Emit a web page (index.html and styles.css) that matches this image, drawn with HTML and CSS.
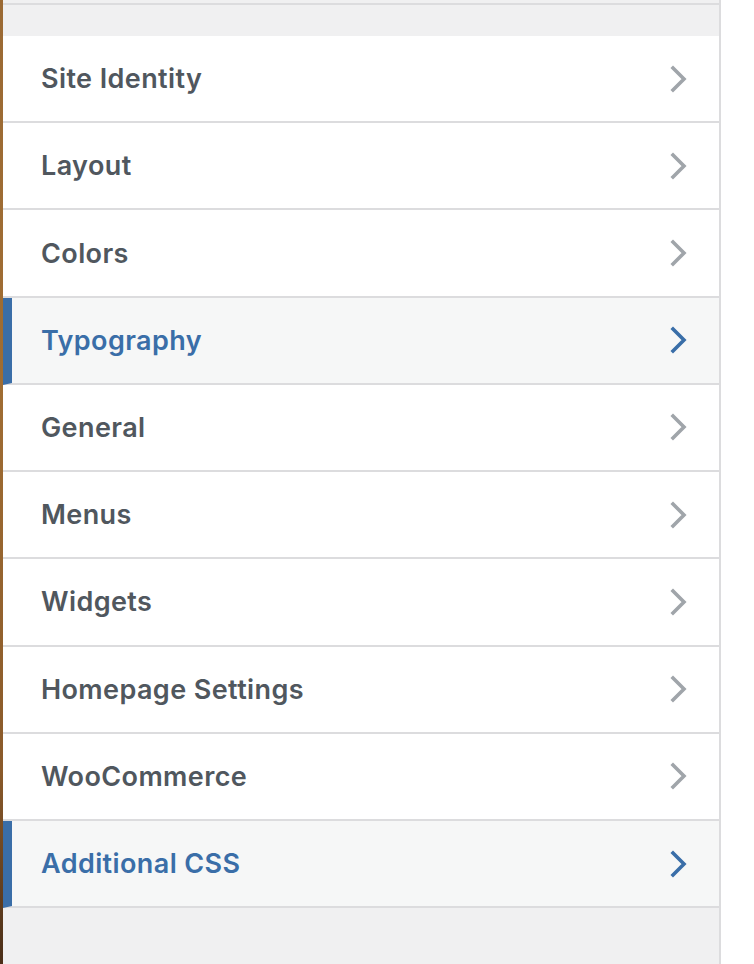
FILE: index.html
```html
<!DOCTYPE html>
<html lang="en">
<head>
<meta charset="utf-8">
<title>Customizer</title>
<link rel="stylesheet" href="styles.css">
</head>
<body>
<div class="frame">
  <div class="wood"></div>
  <div class="panel">
    <div class="top-band"></div>
    <ul class="sections">
      <li class="row"><span class="label">Site Identity</span><svg class="chev" viewBox="0 0 18 28"><polyline points="3,3 14,14 3,25"/></svg></li>
      <li class="row"><span class="label">Layout</span><svg class="chev" viewBox="0 0 18 28"><polyline points="3,3 14,14 3,25"/></svg></li>
      <li class="row"><span class="label">Colors</span><svg class="chev" viewBox="0 0 18 28"><polyline points="3,3 14,14 3,25"/></svg></li>
      <li class="row active"><span class="label">Typography</span><svg class="chev" viewBox="0 0 18 28"><polyline points="3,3 14,14 3,25"/></svg></li>
      <li class="row"><span class="label">General</span><svg class="chev" viewBox="0 0 18 28"><polyline points="3,3 14,14 3,25"/></svg></li>
      <li class="row"><span class="label">Menus</span><svg class="chev" viewBox="0 0 18 28"><polyline points="3,3 14,14 3,25"/></svg></li>
      <li class="row"><span class="label">Widgets</span><svg class="chev" viewBox="0 0 18 28"><polyline points="3,3 14,14 3,25"/></svg></li>
      <li class="row"><span class="label">Homepage Settings</span><svg class="chev" viewBox="0 0 18 28"><polyline points="3,3 14,14 3,25"/></svg></li>
      <li class="row"><span class="label">WooCommerce</span><svg class="chev" viewBox="0 0 18 28"><polyline points="3,3 14,14 3,25"/></svg></li>
      <li class="row active"><span class="label">Additional CSS</span><svg class="chev" viewBox="0 0 18 28"><polyline points="3,3 14,14 3,25"/></svg></li>
    </ul>
    <div class="bottom-fill"></div>
  </div>
  <div class="outside"></div>
</div>
</body>
</html>
```
FILE: styles.css
```css
html, body {
  margin: 0;
  padding: 0;
  background: #ffffff;
}
body {
  font-family: "Inter", "Noto Sans", "Liberation Sans", sans-serif;
}
.frame {
  display: flex;
  height: 964px;
}
.wood {
  width: 3px;
  flex: none;
  background: linear-gradient(180deg, #9b6a34 0%, #a06d33 40%, #8a5a2a 80%, #4a2e18 100%);
}
.panel {
  width: 716px;
  flex: none;
  display: flex;
  flex-direction: column;
  border-right: 2px solid #dcdcde;
  background: #f0f0f1;
}
.top-band {
  height: 31px;
  margin-top: 3px;
  border-top: 2px solid #dcdcde;
  background: #f0f0f1;
}
.sections {
  list-style: none;
  margin: 0;
  padding: 0;
}
.row {
  box-sizing: border-box;
  height: 87.22px;
  display: flex;
  align-items: center;
  justify-content: space-between;
  padding: 0 31px 0 38px;
  background: #ffffff;
  border-bottom: 2px solid #dcdcde;
  color: #50575e;
}
.row.active {
  background: #f6f7f7;
  color: #3a6ea8;
  border-left: 9px solid #3a6ea8;
  padding-left: 29px;
}
.label {
  font-size: 27px;
  font-weight: 600;
  letter-spacing: 0.4px;
}
.chev {
  width: 18px;
  height: 28px;
  flex: none;
}
.chev polyline {
  fill: none;
  stroke: #a0a5aa;
  stroke-width: 3.6;
  stroke-linecap: square;
  stroke-linejoin: miter;
}
.row.active .chev polyline {
  stroke: #3a6ea8;
}
.bottom-fill {
  flex: 1;
  background: #f0f0f1;
}
.outside {
  flex: 1;
  background: #ffffff;
}
```
